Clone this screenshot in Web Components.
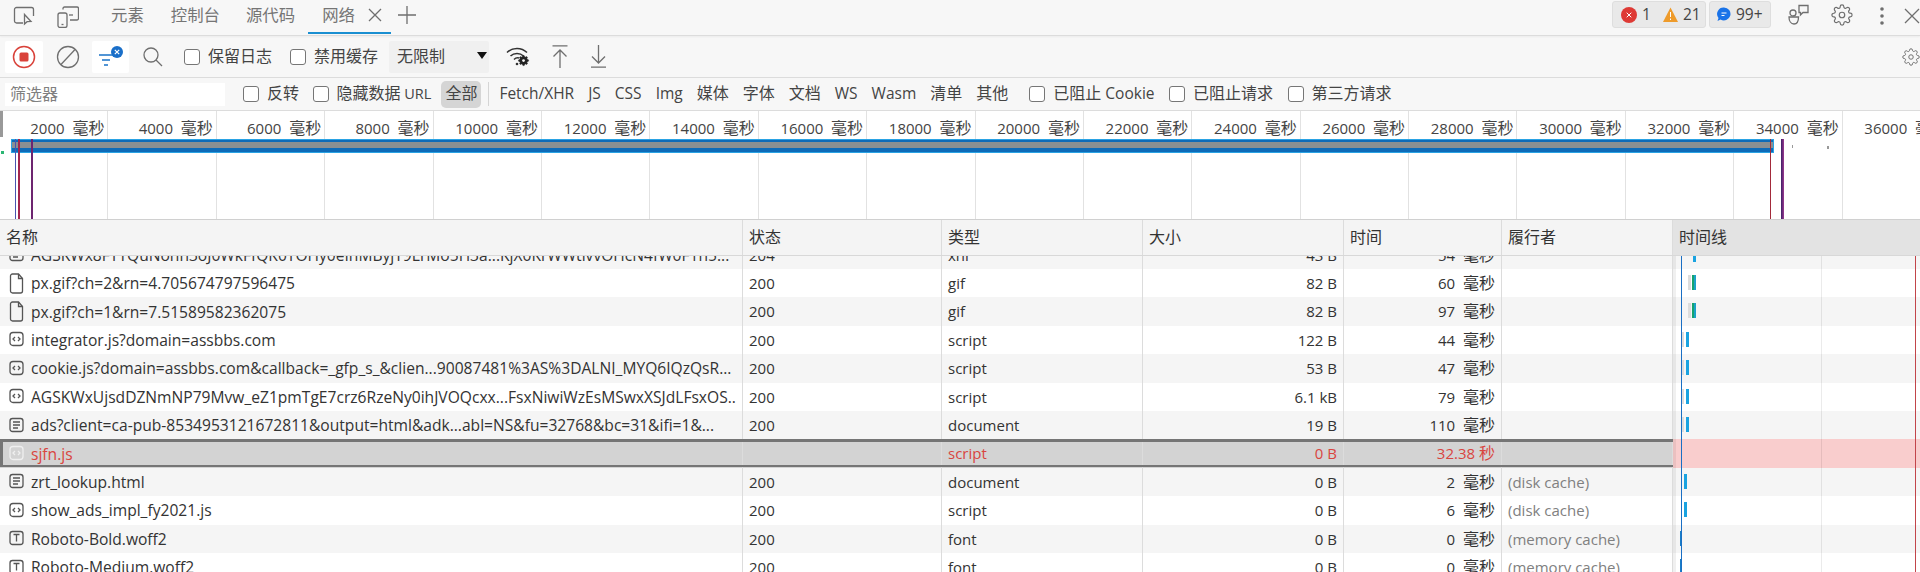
<!DOCTYPE html>
<html lang="zh">
<head>
<meta charset="utf-8">
<title>网络</title>
<style>
    html, body {
        margin: 0;
        height: 572px;
        overflow: hidden;
        background: #fff;
        color: #333;
        font: 15px/1.2 "Open Sans", "Noto Sans CJK SC", sans-serif;
    }
</style>
</head>
<body>
<net-tabbar></net-tabbar>
<net-toolbar></net-toolbar>
<net-filterbar></net-filterbar>
<net-overview></net-overview>
<net-table></net-table>

<script>
const GEAR = 'M19.4 15a1.65 1.65 0 0 0 .33 1.82l.06.06a2 2 0 0 1 0 2.83 2 2 0 0 1-2.83 0l-.06-.06a1.65 1.65 0 0 0-1.82-.33 1.65 1.65 0 0 0-1 1.51V21a2 2 0 0 1-2 2 2 2 0 0 1-2-2v-.09A1.65 1.65 0 0 0 9 19.4a1.65 1.65 0 0 0-1.82.33l-.06.06a2 2 0 0 1-2.83 0 2 2 0 0 1 0-2.83l.06-.06a1.65 1.65 0 0 0 .33-1.82 1.65 1.65 0 0 0-1.51-1H3a2 2 0 0 1-2-2 2 2 0 0 1 2-2h.09A1.65 1.65 0 0 0 4.6 9a1.65 1.65 0 0 0-.33-1.82l-.06-.06a2 2 0 0 1 0-2.83 2 2 0 0 1 2.83 0l.06.06a1.65 1.65 0 0 0 1.82.33H9a1.65 1.65 0 0 0 1-1.51V3a2 2 0 0 1 2-2 2 2 0 0 1 2 2v.09a1.65 1.65 0 0 0 1 1.51 1.65 1.65 0 0 0 1.82-.33l.06-.06a2 2 0 0 1 2.83 0 2 2 0 0 1 0 2.83l-.06.06a1.65 1.65 0 0 0-.33 1.82V9a1.65 1.65 0 0 0 1.51 1H21a2 2 0 0 1 2 2 2 2 0 0 1-2 2h-.09a1.65 1.65 0 0 0-1.51 1z';

const svg = (w, h, box, body, extra = '') =>
    `<svg width="${w}" height="${h}" viewBox="${box}" fill="none" stroke="#6f6f6f" stroke-width="1.3" ${extra}>${body}</svg>`;

const gearIcon = (size) => svg(size, size, '0 0 24 24', `<circle cx="12" cy="12" r="3"/><path d="${GEAR}"/>`);

// CJK runs are a touch larger than the latin next to them
const zh = (text) => text.replace(/[\u4e00-\u9fff]+/g, m => `<span style="font-size:16px">${m}</span>`);

class NetCheck extends HTMLElement {
    constructor() {
        super();
        this.attachShadow({ mode: 'open' });
    }

    connectedCallback() {
        this.shadowRoot.innerHTML = `
            <style>
                :host {
                    display: inline-flex;
                    align-items: center;
                    gap: 8px;
                    white-space: pre;
                    font-size: 16px;
                }

                .box {
                    width: 14px;
                    height: 14px;
                    border: 1px solid #767676;
                    border-radius: 3px;
                    background: #fff;
                    flex: none;
                }
            </style>
            <span class="box"></span>
            <span><slot></slot></span>
        `;
    }
}

class NetTabbar extends HTMLElement {
    constructor() {
        super();
        this.attachShadow({ mode: 'open' });
    }

    connectedCallback() {
        this.shadowRoot.innerHTML = `
            <style>
                :host {
                    display: flex;
                    align-items: flex-start;
                    height: 35px;
                    padding-left: 13px;
                    background: #f7f7f7;
                    border-bottom: 1px solid #dcdcdc;
                    box-shadow: 0 1px 2px rgba(0, 0, 0, 0.05);
                    color: #757575;
                    font-size: 16.4px;
                    position: relative;
                }

                .ico {
                    display: flex;
                    margin-top: 6px;
                }

                .tabs {
                    display: flex;
                    margin-left: 19px;
                    height: 34px;
                }

                .tab {
                    display: flex;
                    align-items: center;
                    padding: 0 13px;
                    height: 30px;
                }

                .tab.active {
                    align-items: flex-start;
                    border-bottom: 2px solid #1a8fd1;
                    gap: 13px;
                    height: 32px;
                    padding-right: 9px;
                }

                .tab.active span {
                    line-height: 30px;
                }

                .tab.active svg {
                    margin-top: 8px;
                }

                .plus {
                    display: flex;
                    margin: 6px 0 0 7px;
                }

                .right {
                    margin-left: auto;
                    display: flex;
                    align-items: flex-start;
                }

                .badge {
                    display: flex;
                    align-items: center;
                    height: 25px;
                    margin-top: 1px;
                    background: #e9e9e9;
                    border: 1px solid #dedede;
                    border-radius: 3px;
                    color: #444;
                    font-size: 15.5px;
                }

                .errors {
                    width: 84px;
                    padding-left: 8px;
                    gap: 5px;
                }

                .issues {
                    width: 53px;
                    padding-left: 7px;
                    gap: 5px;
                    margin-left: 3px;
                }

                .badge svg {
                    flex: none;
                }

                .tools {
                    display: flex;
                    align-items: flex-start;
                }
            </style>
            <span class="ico">${svg(23, 20, '0 0 23 20', '<path d="M10 17H3.5a2 2 0 0 1-2-2V3.5a2 2 0 0 1 2-2h15a2 2 0 0 1 2 2V10"/><path d="M11.5 8.5v9.5l2.6-2.3 3.9-.2z"/>')}</span>
            <span class="ico" style="margin-left:21px">${svg(22, 22, '0 0 22 22', '<rect x="1" y="7" width="9" height="14.5" rx="2"/><path d="M4.5 18.5h2"/><path d="M6 3.5V2.5a1.5 1.5 0 0 1 1.5-1.5h12.500a1.500 1.500 0 0 1 1.500 1.500v10a1.500 1.500 0 0 1-1.500 1.500h-7"/><path d="M12 9h4"/>')}</span>
            <div class="tabs" style="margin-left:19px">
                <div class="tab">元素</div>
                <div class="tab" style="padding-left:14px">控制台</div>
                <div class="tab" style="padding-left:13px">源代码</div>
                <div class="tab active" style="padding-left:14px">
                    <span>网络</span>
                    ${svg(14, 14, '0 0 14 14', '<path d="M1 1l12 12M13 1L1 13"/>')}
                </div>
                <span class="plus">${svg(18, 18, '0 0 18 18', '<path d="M9 0v18M0 9h18"/>')}</span>
            </div>
            <div class="right">
                <div class="badge errors">
                    ${svg(16, 16, '0 0 16 16', '<circle cx="8" cy="8" r="8" fill="#de3a35" stroke="none"/><path d="M5.700 5.700l4.600 4.600M10.300 5.700l-4.600 4.600" stroke="#fff" stroke-width="1"/>')}
                    <span>1</span>
                    ${svg(15, 15, '0 0 15 15', '<path d="M7.500 0.500L15 15H0z" fill="#ee9b2b" stroke="none"/><path d="M7.500 5v5M7.500 11.500v1.500" stroke="#fff" stroke-width="1"/>', 'style="margin-left:7px"')}
                    <span>21</span>
                </div>
                <div class="badge issues">
                    ${svg(14, 15, '0 0 14 15', '<path d="M7 0.500a6.500 6.500 0 1 1-3.500 12L0.500 14l1-3A6.500 6.500 0 0 1 7 0.500z" fill="#1a73e8" stroke="none"/><path d="M4.500 6h5M4.500 8.500h3" stroke="#fff" stroke-width="1"/>')}
                    <span>99+</span>
                </div>
                <div class="tools">
                    <span class="ico" style="margin:4px 0 0 17px">${svg(22, 21, '0 0 22 21', '<circle cx="5" cy="9" r="3"/><path d="M1 13h9.500c0 4-1.500 7-4.500 7S1 17 1 13z"/><path d="M11 1.500h9v7h-5l-2.500 2.500V8.500H11z"/>')}</span>
                    <span class="ico" style="margin:4px 0 0 21px">${gearIcon(22)}</span>
                    <span class="ico" style="margin:7px 0 0 27px">
                        <svg width="4" height="18" viewBox="0 0 4 18" fill="#6f6f6f"><circle cx="2" cy="2" r="1.800"/><circle cx="2" cy="9" r="1.800"/><circle cx="2" cy="16" r="1.800"/></svg>
                    </span>
                    <span class="ico" style="margin:8px 0 0 20px;width:16px;overflow:hidden">${svg(16, 16, '0 0 16 16', '<path d="M1 1l14 14M15 1L1 15"/>')}</span>
                </div>
            </div>
        `;
    }
}

class NetToolbar extends HTMLElement {
    constructor() {
        super();
        this.attachShadow({ mode: 'open' });
    }

    connectedCallback() {
        this.shadowRoot.innerHTML = `
            <style>
                :host {
                    display: flex;
                    align-items: center;
                    height: 41px;
                    padding-left: 5px;
                    background: #f7f7f7;
                    border-bottom: 1px solid #dcdcdc;
                    font-size: 16px;
                    color: #444;
                    overflow: hidden;
                }

                .btn {
                    display: flex;
                    align-items: center;
                    justify-content: center;
                    height: 32px;
                    flex: none;
                    position: relative;
                }

                .white {
                    background: #fff;
                    border-radius: 2px;
                }

                .throttle {
                    display: flex;
                    align-items: center;
                    justify-content: space-between;
                    width: 100px;
                    height: 32px;
                    padding: 0 2px 0 8px;
                    box-sizing: border-box;
                    background: #f0f0f0;
                    margin-left: 11px;
                    border-radius: 2px;
                }

                .tri {
                    width: 0;
                    height: 0;
                    border: 5px solid transparent;
                    border-top: 7px solid #111;
                    border-bottom: 0;
                    margin-bottom: 3px;
                }

                .end {
                    margin-left: auto;
                    display: flex;
                    width: 18px;
                    overflow: hidden;
                }
            </style>
            <span class="btn white" style="width:38px">
                <svg width="24" height="24" viewBox="0 0 24 24" fill="none">
                    <circle cx="12" cy="12" r="10.500" stroke="#d9423a" stroke-width="1.500"/>
                    <rect x="7.500" y="7.500" width="9" height="9" rx="1.500" fill="#d9423a"/>
                </svg>
            </span>
            <span class="btn" style="width:49px">${svg(24, 24, '0 0 24 24', '<circle cx="12" cy="12" r="10.500"/><path d="M19 4.500L5 19.500"/>')}</span>
            <span class="btn white" style="width:37px">
                <svg width="30" height="26" viewBox="0 0 30 26" fill="none" stroke="#1a73c8" stroke-width="1.500">
                    <path d="M3 11h14M6 16h8M8 21h4"/>
                    <circle cx="21" cy="8" r="6" fill="#1a6fc9" stroke="none"/>
                    <path d="M18.800 5.800l4.400 4.400M23.200 5.800l-4.400 4.400" stroke="#fff" stroke-width="1.200"/>
                </svg>
            </span>
            <span class="btn" style="width:48px">${svg(22, 22, '0 0 22 22', '<circle cx="9" cy="9" r="7"/><path d="M14 14l6 6"/>')}</span>
            <net-check style="margin-left:7px">保留日志</net-check>
            <net-check style="margin-left:18px">禁用缓存</net-check>
            <div class="throttle"><span>无限制</span><span class="tri"></span></div>
            <span class="btn" style="margin-left:17px;width:24px">
                <svg width="24" height="21" viewBox="0 0 24 21" fill="none" stroke="#333" stroke-width="1.500">
                    <path d="M1 6.500C6.500 1 15.500 1 21 6.500"/>
                    <path d="M4.500 10C8 6.500 14 6.500 17.500 10"/>
                    <path d="M8 13.500C9.500 12 11 11.500 13 12"/>
                    <circle cx="11" cy="18" r="1.300" fill="#333" stroke="none"/>
                    <g transform="translate(12 9) scale(0.46)"><circle cx="12" cy="12" r="8" fill="#222"/><path d="${GEAR}" fill="#222"/><circle cx="12" cy="12" r="3" fill="#f7f7f7" stroke="none"/></g>
                </svg>
            </span>
            <span class="btn" style="margin-left:22px;width:16px">${svg(16, 23, '0 0 16 23', '<path d="M0.500 0.800h15M8 23V5M1.500 11.500L8 5l6.500 6.500"/>')}</span>
            <span class="btn" style="margin-left:21px;width:18px">${svg(17, 23, '0 0 17 23', '<path d="M1 22.200h15M8.500 0v18M2 11.500L8.500 18l6.500-6.500"/>')}</span>
            <span class="end">${gearIcon(24)}</span>
        `;
    }
}

class NetFilterbar extends HTMLElement {
    constructor() {
        super();
        this.attachShadow({ mode: 'open' });
    }

    connectedCallback() {
        const types = ['Fetch/XHR', 'JS', 'CSS', 'Img', '媒体', '字体', '文档', 'WS', 'Wasm', '清单', '其他'];
        this.shadowRoot.innerHTML = `
            <style>
                :host {
                    display: flex;
                    align-items: center;
                    height: 32px;
                    padding-left: 5px;
                    background: #f7f7f7;
                    border-bottom: 1px solid #dcdcdc;
                    font-size: 15.500px;
                    color: #444;
                    white-space: pre;
                }

                .input {
                    width: 220px;
                    height: 23px;
                    line-height: 23px;
                    padding-left: 5px;
                    box-sizing: border-box;
                    background: #fff;
                    color: #808080;
                    font-size: 16px;
                    margin-right: 18px;
                }

                .all {
                    display: flex;
                    align-items: center;
                    justify-content: center;
                    width: 40px;
                    height: 27px;
                    margin-left: 10px;
                    background: #d5d5d5;
                    border-radius: 5px;
                    font-size: 16px;
                }

                .sep {
                    width: 1px;
                    height: 24px;
                    margin: 0 10px 0 7px;
                    background: #d5d5d5;
                }

                .types {
                    display: flex;
                    gap: 14px;
                }
            </style>
            <div class="input">筛选器</div>
            <net-check>反转</net-check>
            <net-check style="margin-left:13.500px">隐藏数据<span style="font-size:14.500px"> URL</span></net-check>
            <div class="all">全部</div>
            <span class="sep"></span>
            <div class="types">${types.map(t => `<span>${zh(t)}</span>`).join('')}</div>
            <net-check style="margin-left:21px">已阻止<span style="font-size:15.500px"> Cookie</span></net-check>
            <net-check style="margin-left:14.500px">已阻止请求</net-check>
            <net-check style="margin-left:14.500px">第三方请求</net-check>
        `;
    }
}

class NetOverview extends HTMLElement {
    constructor() {
        super();
        this.attachShadow({ mode: 'open' });
    }

    connectedCallback() {
        const ticks = [];
        for (let ms = 2000; ms <= 36000; ms += 2000) {
            ticks.push(`<div class="tick">${zh(`${ms}  毫秒`)}</div>`);
        }
        this.shadowRoot.innerHTML = `
            <style>
                :host {
                    display: block;
                    height: 108px;
                    position: relative;
                    background: #fff;
                    border-bottom: 1px solid #d0d0d0;
                    overflow: hidden;
                    font-size: 15px;
                    color: #444;
                }

                .ticks {
                    display: grid;
                    grid-template-columns: repeat(18, 108.400px);
                    height: 100%;
                }

                .tick {
                    box-sizing: border-box;
                    border-right: 1px solid #e2e2e2;
                    padding: 8px 3px 0 0;
                    text-align: right;
                    white-space: pre;
                }

                .bar {
                    position: absolute;
                    left: 11px;
                    top: 28px;
                    width: 1763px;
                    height: 14px;
                    box-sizing: border-box;
                    border: 1px solid #2aa3e4;
                    background: linear-gradient(#0e6bb8 0 2px, #8a8f92 2px 8px, #0e6bb8 8px);
                }

                .mark {
                    position: absolute;
                    top: 28px;
                    bottom: 0;
                }

                .dot {
                    position: absolute;
                    width: 2px;
                    height: 3px;
                    background: #999;
                }
            </style>
            <div class="ticks">${ticks.join('')}</div>
            <span class="dot" style="left:0;top:0;width:3px;height:26px"></span>
            <span class="dot" style="left:1px;top:40px;width:3px;background:#2bb673"></span>
            <div class="bar"></div>
            <span class="mark" style="left:15px;width:1px;background:#4a55b0"></span>
            <span class="mark" style="left:18px;width:2px;background:#a3264f"></span>
            <span class="mark" style="left:31px;width:2px;background:#6d2570"></span>
            <span class="mark" style="left:1770px;width:1px;background:#a32a3a"></span>
            <span class="mark" style="left:1781px;width:3px;background:linear-gradient(90deg,#3a1f66,#a03a90)"></span>
            <span class="dot" style="left:1792px;top:34px;width:1px"></span>
            <span class="dot" style="left:1827px;top:35px"></span>
        `;
    }
}

class NetRow extends HTMLElement {
    constructor() {
        super();
        this.attachShadow({ mode: 'open' });
    }

    static icons = {
        file: '<path d="M1.500 3a2 2 0 0 1 2-2h6l4 4.500V18a2 2 0 0 1-2 2h-8a2 2 0 0 1-2-2z"/><path d="M9.500 1v4.500h4"/>',
        script: '<rect x="1" y="3.500" width="13" height="13" rx="3"/><path d="M6 8l-2 2 2 2M9 8l2 2-2 2"/>',
        doc: '<rect x="1" y="3.500" width="13" height="13" rx="2.500"/><path d="M4 7h7M4 10h7M4 13h5"/>',
        font: '<rect x="1" y="3.500" width="13" height="13" rx="2.500"/><path d="M4.500 6.500h6M7.500 6.500v7"/>'
    };

    connectedCallback() {
        const a = (name) => this.getAttribute(name) || '';
        const selected = this.hasAttribute('selected');
        const pre = a('pre').split(',');
        const [barLeft, barWidth, ...barFill] = a('bar').split(',');
        this.shadowRoot.innerHTML = `
            <style>
                :host {
                    display: grid;
                    grid-template-columns: var(--net-cols);
                    grid-template-rows: 28.400px;
                    height: 28.400px;
                    line-height: 29px;
                    position: relative;
                    background: #fff;
                    white-space: pre;
                }

                :host([odd]) {
                    background: #f5f5f5;
                }

                :host([selected]) {
                    background: #d3d3d3;
                    color: #d9453f;
                }

                :host([selected])::after {
                    content: '';
                    position: absolute;
                    left: 0;
                    top: 0;
                    bottom: 1px;
                    width: 1673px;
                    box-sizing: border-box;
                    border: solid #757575;
                    border-width: 3px 0 2px 3px;
                }

                .cell {
                    padding: 0 6px;
                    border-right: 1px solid #dcdcdc;
                    overflow: hidden;
                    min-width: 0;
                }

                .name {
                    display: flex;
                    align-items: center;
                    gap: 7px;
                    padding-left: 9px;
                }

                .name svg {
                    flex: none;
                }

                .label {
                    overflow: hidden;
                    font-size: 15.600px;
                    padding-top: 1px;
                }

                .num {
                    text-align: right;
                }

                .by {
                    color: #808080;
                }

                .fall {
                    position: relative;
                    white-space: normal;
                }

                :host([selected]) .fall {
                    background: #f9cdcd;
                }

                .fall span {
                    position: absolute;
                    top: 6px;
                    height: 15px;
                }
            </style>
            <div class="cell name">
                ${svg(15, 21, '0 0 15 21', NetRow.icons[a('icon')], selected ? 'style="stroke:#efefef"' : 'style="stroke:#555"')}
                <span class="label"><slot></slot></span>
            </div>
            <div class="cell">${a('status')}</div>
            <div class="cell">${a('kind')}</div>
            <div class="cell num">${a('size')}</div>
            <div class="cell num">${zh(a('time'))}</div>
            <div class="cell by">${a('by')}</div>
            <div class="fall">
                ${pre[0] ? `<span style="left:${pre[0]}px;width:${pre[1]}px;background:#ddd"></span>` : ''}
                ${barLeft ? `<span style="left:${barLeft}px;width:${barWidth}px;background:${barFill.join(',')}"></span>` : ''}
            </div>
        `;
    }
}

class NetTable extends HTMLElement {
    constructor() {
        super();
        this.attachShadow({ mode: 'open' });
        this.rows = [
            ['AGSKWx8FTTQuNohn3oJ0WkFfQK0TOHy0eIhMByjT9LrMo5H3a...KjX0KrWWtivvOHcN4fW0F1n5...', 'doc', '204', 'xhr', '43 B', '54  毫秒', '', '', '20,3,#1aa3e0'],
            ['px.gif?ch=2&rn=4.705674797596475', 'file', '200', 'gif', '82 B', '60  毫秒', '', '15,3', '19,4,linear-gradient(90deg,#16a36f 40%,#1aa3c8 40%)'],
            ['px.gif?ch=1&rn=7.51589582362075', 'file', '200', 'gif', '82 B', '97  毫秒', '', '15,3', '19,4,linear-gradient(90deg,#16a36f 40%,#1aa3c8 40%)'],
            ['integrator.js?domain=assbbs.com', 'script', '200', 'script', '122 B', '44  毫秒', '', '9,2', '13,3,#1aa3e0'],
            ['cookie.js?domain=assbbs.com&callback=_gfp_s_&clien...90087481%3AS%3DALNI_MYQ6IQzQsR...', 'script', '200', 'script', '53 B', '47  毫秒', '', '9,2', '13,3,#1aa3e0'],
            ['AGSKWxUjsdDZNmNP79Mvw_eZ1pmTgE7crz6RzeNy0ihJVOQcxx...FsxNiwiWzEsMSwxXSJdLFsxOS...', 'script', '200', 'script', '6.1 kB', '79  毫秒', '', '9,2', '13,3,#1aa3e0'],
            ['ads?client=ca-pub-8534953121672811&output=html&adk...abl=NS&fu=32768&bc=31&ifi=1&...', 'doc', '200', 'document', '19 B', '110  毫秒', '', '9,2', '13,3,#1aa3e0'],
            ['sjfn.js', 'script', '', 'script', '0 B', '32.38 秒', '', '', '', true],
            ['zrt_lookup.html', 'doc', '200', 'document', '0 B', '2  毫秒', '(disk cache)', '', '11,3,#1aa3e0'],
            ['show_ads_impl_fy2021.js', 'script', '200', 'script', '0 B', '6  毫秒', '(disk cache)', '', '11,3,#1aa3e0'],
            ['Roboto-Bold.woff2', 'font', '200', 'font', '0 B', '0  毫秒', '(memory cache)', '', '7,2,#1a7fc8'],
            ['Roboto-Medium.woff2', 'font', '200', 'font', '0 B', '0  毫秒', '(memory cache)', '', '7,2,#1a7fc8']
        ];
    }

    connectedCallback() {
        const heads = ['名称', '状态', '类型', '大小', '时间', '履行者', '时间线'];
        this.shadowRoot.innerHTML = `
            <style>
                :host {
                    --net-cols: 743px 199px 201px 201px 158px 171px 247px;
                    display: flex;
                    flex-direction: column;
                    height: 352px;
                    overflow: hidden;
                }

                .head {
                    display: grid;
                    grid-template-columns: var(--net-cols);
                    height: 35px;
                    flex: none;
                    line-height: 34px;
                    background: #f4f4f4;
                    border-bottom: 1px solid #d8d8d8;
                    font-size: 16px;
                    position: relative;
                    z-index: 1;
                }

                .head div {
                    padding-left: 6px;
                    border-right: 1px solid #dcdcdc;
                }

                .head div:last-child {
                    background: #e3e3e3;
                    border: 0;
                }

                .body {
                    position: relative;
                    flex: 1;
                    overflow: hidden;
                }

                .list {
                    margin-top: -15.400px;
                }

                .line {
                    position: absolute;
                    top: 0;
                    bottom: 0;
                }
            </style>
            <div class="head">${heads.map(h => `<div>${h}</div>`).join('')}</div>
            <div class="body">
                <div class="list"></div>
                <span class="line" style="left:1673px;width:3px;background:rgba(0,0,0,0.06)"></span>
                <span class="line" style="left:1821px;width:1px;background:rgba(0,0,0,0.08)"></span>
                <span class="line" style="left:1681px;width:1px;background:#1a6fc4"></span>
                <span class="line" style="left:1915px;width:1px;background:#c2454a"></span>
            </div>
        `;
        const list = this.shadowRoot.querySelector('.list');
        this.rows.forEach((r, i) => {
            const row = document.createElement('net-row');
            row.textContent = r[0];
            row.setAttribute('icon', r[1]);
            row.setAttribute('status', r[2]);
            row.setAttribute('kind', r[3]);
            row.setAttribute('size', r[4]);
            row.setAttribute('time', r[5]);
            row.setAttribute('by', r[6]);
            row.setAttribute('pre', r[7]);
            row.setAttribute('bar', r[8]);
            if (i % 2 === 0) row.setAttribute('odd', '');
            if (r[9]) row.setAttribute('selected', '');
            list.appendChild(row);
        });
    }
}

customElements.define('net-check', NetCheck);
customElements.define('net-tabbar', NetTabbar);
customElements.define('net-toolbar', NetToolbar);
customElements.define('net-filterbar', NetFilterbar);
customElements.define('net-overview', NetOverview);
customElements.define('net-row', NetRow);
customElements.define('net-table', NetTable);
</script>
</body>
</html>
